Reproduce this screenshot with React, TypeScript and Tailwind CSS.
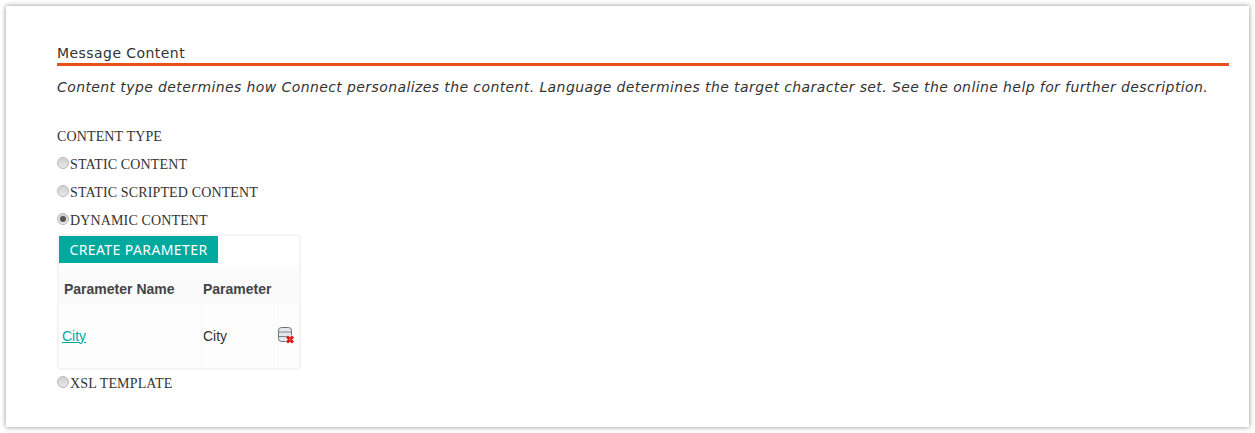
const serif = "font-['Liberation_Serif','Times_New_Roman',serif]";

function RadioRow({ label, checked = false }: { label: string; checked?: boolean }) {
  return (
    <label className="flex h-[28px] items-center text-[14px] leading-none tracking-[0.14px] text-[#333]">
      <span className="relative -top-[2px] mr-[1px] flex h-[12px] w-[12px] items-center justify-center rounded-full border border-[#b9b9b9] bg-gradient-to-b from-[#cfcfcf] to-[#e9e9e9]">
        {checked && <span className="h-[6px] w-[6px] rounded-full bg-[#555]" />}
      </span>
      <span>{label}</span>
    </label>
  );
}

function DbDeleteIcon() {
  return (
    <svg width="17" height="18" viewBox="0 0 17 18">
      <rect x="0.5" y="0.5" width="13" height="14" rx="3" fill="#e6e8ec" stroke="#6b7280" />
      <path d="M1 5h12M1 9.5h12" fill="none" stroke="#7c8490" />
      <path d="M8.8 9.3l6.4 6.4M15.2 9.3l-6.4 6.4" stroke="#fff" strokeWidth="4" />
      <path d="M9 9.5l6 6M15 9.5l-6 6" stroke="#d8140c" strokeWidth="3" />
      <path d="M10.8 11.3l2.4 2.4M13.2 11.3l-2.4 2.4" stroke="#f0705f" strokeWidth="0.7" />
    </svg>
  );
}

export default function App() {
  return (
    <div className="h-[433px] w-[1255px] overflow-hidden bg-white p-[6px]">
      <div className={`h-[421px] w-[1243px] bg-white pl-[51px] pr-[20px] pt-[38px] shadow-[0_0_5px_rgba(0,0,0,0.45)] ${serif}`}>
        <h2 className="font-['DejaVu_Sans',sans-serif] text-[14px] leading-[19px] tracking-[0.44px] text-[#333]">
          Message Content
        </h2>
        <div className="h-[3px] bg-[#e8501a]" />
        <p className="mt-[12px] font-['DejaVu_Sans',sans-serif] text-[14px] italic leading-[19px] tracking-[0.4px] text-[#333]">
          Content type determines how Connect personalizes the content. Language determines the target character set. See the online help for further description.
        </p>
        <div className="mt-[32px] text-[14px] leading-[16px] tracking-[0.14px] text-[#333]">CONTENT TYPE</div>
        <div className="mt-[6px]">
          <RadioRow label="STATIC CONTENT" />
          <RadioRow label="STATIC SCRIPTED CONTENT" />
          <RadioRow label="DYNAMIC CONTENT" checked />
        </div>
        <div className="-mt-[1px] w-[244px] rounded-[4px] border-2 border-[#f4f4f4] font-['Liberation_Sans',Arial,sans-serif] text-[14px]">
          <button className="block h-[27px] w-[159px] bg-[#00a99d] font-['Noto_Sans',sans-serif] text-[14px] tracking-[0.4px] text-white">
            CREATE PARAMETER
          </button>
          <div className="flex h-[41px] items-center bg-gradient-to-b from-white to-[#fafafa] to-30% pt-[11px] font-bold text-[#444]">
            <span className="w-[144px] pl-[5px]">Parameter Name</span>
            <span>Parameter</span>
          </div>
          <div className="flex h-[64px] items-stretch bg-[#fdfdfd] text-[#333]">
            <a href="#" className="flex w-[142px] items-center pl-[3px] text-[#00a99d] underline">City</a>
            <span className="flex w-[76px] items-center border-l border-[#f8f8f8] pl-[1px]">City</span>
            <span className="flex flex-1 items-center border-l border-[#f8f8f8]">
              <DbDeleteIcon />
            </span>
          </div>
        </div>
        <div>
          <RadioRow label="XSL TEMPLATE" />
        </div>
      </div>
    </div>
  );
}
